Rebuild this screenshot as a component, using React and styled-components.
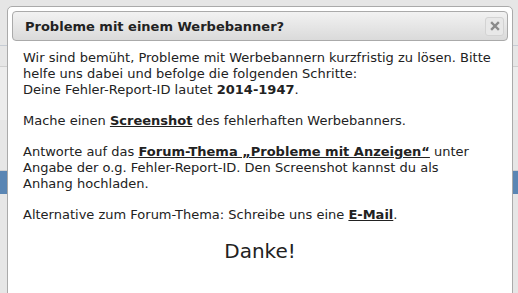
import React from 'react'
import styled, { createGlobalStyle } from 'styled-components'

const Global = createGlobalStyle`
  html, body {
    margin: 0;
    padding: 0;
    background: #e4e4e4;
  }
  body {
    width: 518px;
    height: 293px;
    overflow: hidden;
  }
`

const Page = styled.div`
  position: relative;
  width: 518px;
  height: 293px;
  overflow: hidden;
  background: #e6e6e6;
  display: flex;
  flex-direction: column;
`

const Band = styled.div`
  height: ${p => p.h}px;
  background: ${p => p.bg || 'transparent'};
  border-bottom: ${p => (p.line ? `1px solid ${p.line}` : 'none')};
`

const Dialog = styled.div`
  position: absolute;
  left: 7px;
  top: 6px;
  width: 506px;
  height: 300px;
  box-sizing: border-box;
  padding: 4px;
  background: #fff;
  border: 1px solid #aaaaaa;
  border-radius: 5px;
  font-family: Verdana, 'DejaVu Sans', sans-serif;
  color: #222;
`

const TitleBar = styled.div`
  display: flex;
  align-items: center;
  justify-content: space-between;
  height: 28px;
  padding: 0 3px 0 12px;
  border: 1px solid #aaaaaa;
  border-radius: 4px;
  background: linear-gradient(#f2f2f2, #dadada);
`

const Title = styled.span`
  font-size: 13px;
  font-weight: bold;
  color: #222;
`

const Close = styled.button`
  width: 19px;
  height: 19px;
  padding: 0;
  border: 1px solid #d3d3d3;
  border-radius: 3px;
  background: #e8e8e8;
  display: flex;
  align-items: center;
  justify-content: center;
`

const Body = styled.div`
  padding: 9px 11px 0 11px;
  font-size: 13px;
  line-height: 16px;
`

const Para = styled.p`
  margin: 0 0 15px 0;
`

const Link = styled.a`
  color: #222;
  font-weight: bold;
  text-decoration: underline;
`

const Thanks = styled.div`
  text-align: center;
  font-size: 20px;
  line-height: 26px;
  margin: 7px 0 0 0;
  color: #222;
`

export default function App() {
  return (
    <Page>
      <Global />
      <Band h={46} line="#c6ccd4" />
      <Band h={20} line="#cfcfcf" />
      <Band h={54} bg="#ececec" />
      <Band h={50} line="#cfcfcf" />
      <Band h={24} bg="#5a86b4" />
      <Band h={100} />
      <Dialog>
        <TitleBar>
          <Title>Probleme mit einem Werbebanner?</Title>
          <Close aria-label="close">
            <svg width="10" height="10" viewBox="0 0 10 10">
              <path d="M2 2 L8 8 M8 2 L2 8" stroke="#8a8a8a" strokeWidth="2.4" strokeLinecap="square" />
            </svg>
          </Close>
        </TitleBar>
        <Body>
          <Para>
            Wir sind bemüht, Probleme mit Werbebannern kurzfristig zu lösen. Bitte
            <br />
            helfe uns dabei und befolge die folgenden Schritte:
            <br />
            Deine Fehler-Report-ID lautet <b>2014-1947</b>.
          </Para>
          <Para>
            Mache einen <Link>Screenshot</Link> des fehlerhaften Werbebanners.
          </Para>
          <Para>
            Antworte auf das <Link>Forum-Thema „Probleme mit Anzeigen“</Link> unter
            <br />
            Angabe der o.g. Fehler-Report-ID. Den Screenshot kannst du als
            <br />
            Anhang hochladen.
          </Para>
          <Para>
            Alternative zum Forum-Thema: Schreibe uns eine <Link>E-Mail</Link>.
          </Para>
          <Thanks>Danke!</Thanks>
        </Body>
      </Dialog>
    </Page>
  )
}
